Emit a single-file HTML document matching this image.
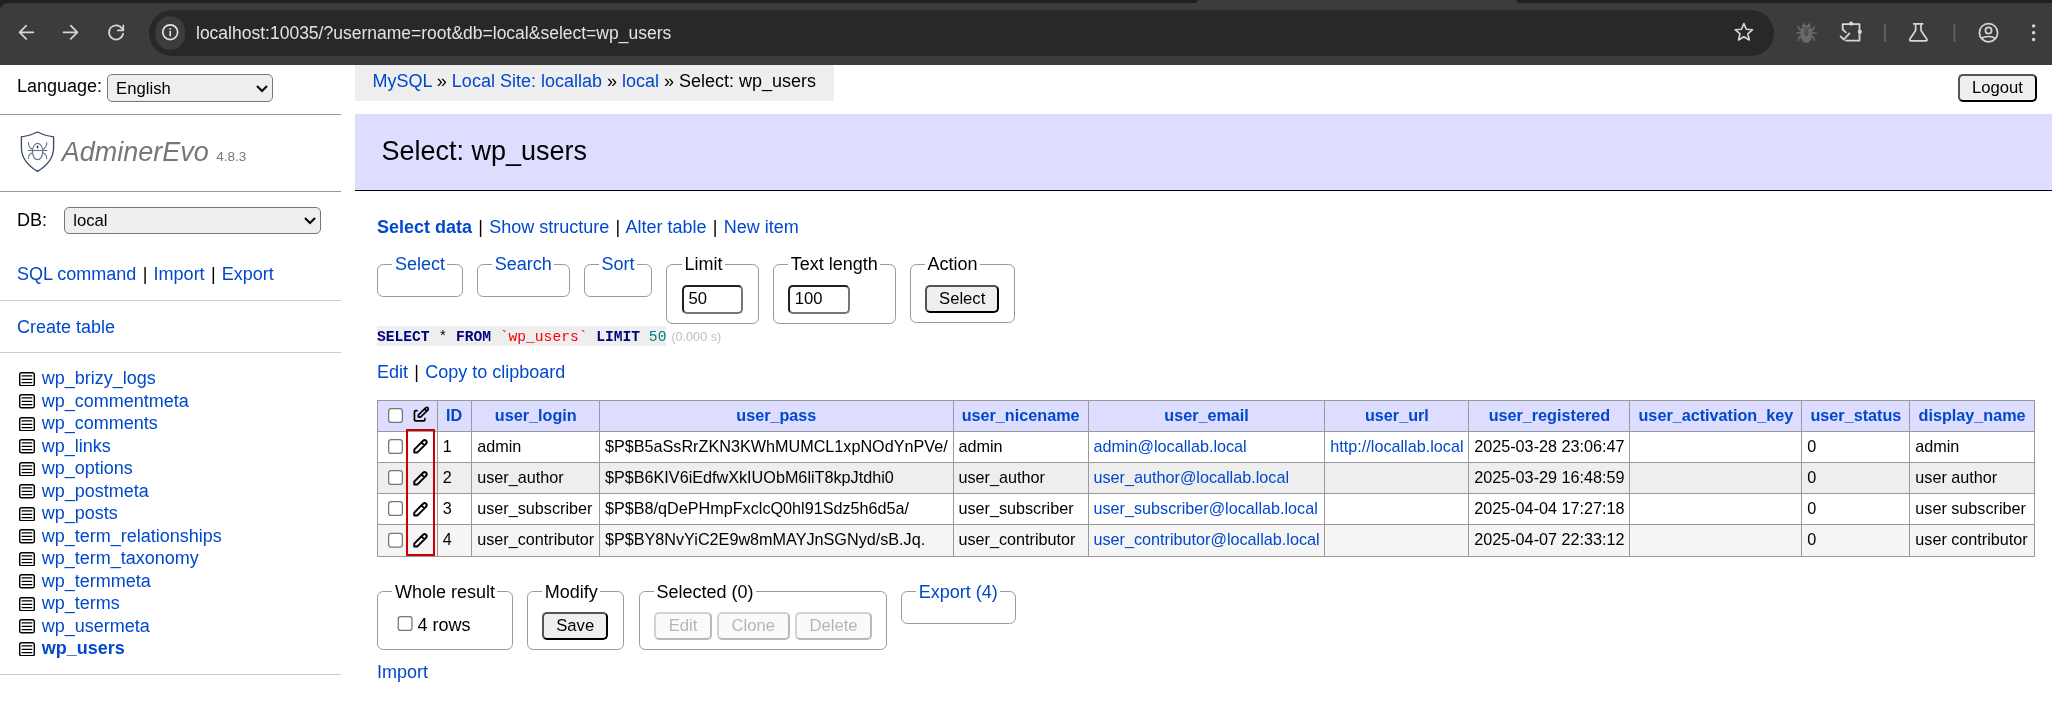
<!DOCTYPE html>
<html><head><meta charset="utf-8">
<style>
html,body{margin:0;padding:0;background:#fff;overflow:hidden}
body{width:2052px;height:703px;position:relative;font-family:"Liberation Sans",sans-serif}
#chrome{will-change:transform;position:absolute;left:0;top:0;width:2052px;height:65px;background:#1f2020;overflow:hidden}
#toolbar{position:absolute;left:0;top:3px;width:2052px;height:62px;background:#3c3c3c;border-top-left-radius:8px}
#acttab{position:absolute;left:1196px;top:0;width:322px;height:4px;background:#3c3c3c;border-radius:6px 6px 0 0}

#omni{position:absolute;left:149px;top:10px;width:1625px;height:46px;border-radius:23px;background:#282828}
#url{position:absolute;left:196px;top:23px;font-size:17.5px;color:#e3e3e3;white-space:pre}
#page{will-change:transform;position:absolute;left:-0.8px;top:52px;width:1700px;height:510.4px;zoom:1.25;overflow:hidden;color:#000;font-size:14.4px;line-height:1.25}
a{color:#0048cc;text-decoration:none}
h1{font-size:150%;margin:0;padding:.8em 1em;border-top:1px solid #999;border-bottom:1px solid #999;font-weight:normal;color:#777;background:#fff;white-space:nowrap}
h2{font-size:150%;margin:0 0 20px -18px;padding:.8em 1em;border-bottom:1px solid #000;color:#000;font-weight:normal;background:#ddf}
form{margin:0}
table{margin:1em 20px 0 0;border-collapse:collapse;font-size:90%}
td,th{border:1px solid #999;padding:.2em .3em}
th{background:#eee;text-align:left}
thead th{text-align:center;padding:.2em .5em}
thead td,thead th{background:#ddf}
fieldset{display:inline;vertical-align:top;padding:8.8px .8em 8px;margin:11.2px .5em 0 0;border:1px solid #999;border-radius:5px}
fieldset.c{padding-top:7.8px;padding-bottom:7.2px}
p{margin:.8em 20px 0 0}
input{vertical-align:middle}
input,select{border-radius:4px;font-family:inherit;font-size:13.33px}
select{padding:1.85px 0 1.85px 2.4px}
input[type=number]{padding:1.75px 3.6px}
input[type=submit]{padding:1.65px 9.6px}
input[disabled]{padding:1.65px 10.1px}
.footer{border-top:19.2px solid #fff}
.footer fieldset{margin-top:0;padding-top:8px}
.footer fieldset.c{padding-top:7px}
code{background:#eee;font-family:"Liberation Mono",monospace;font-size:11.7px;padding:2.4px 0 0.8px}
.jk{color:navy;font-weight:bold}
.js{color:red}
.jn{color:#008080}
.time{color:silver;font-size:70%}
.odds tbody tr:nth-child(2n) td{background:#f5f5f5}
.odds tbody tr.hov td{background:#eee}
.size{width:49.2px;box-sizing:border-box}
#menu{position:absolute;margin:10px 0 0;padding:0 0 30px 0;top:2em;left:0;width:19em}
#menu p,#tables{padding:.8em 1em;margin:0;border-bottom:1px solid #ccc}
#menu p#dbs{border-bottom:0}
#tables{list-style:none;white-space:nowrap}
#tables li{height:18px}
#tables svg{vertical-align:-1.6px;margin-left:1.6px;margin-right:5.4px}
#content{margin:2em 0 0 21em;padding:10px 20px 20px 0}
#lang{position:absolute;top:0;left:0;line-height:1.8em;padding:.3em 1em}
#breadcrumb{white-space:nowrap;position:absolute;top:0;left:21em;background:#eee;height:2em;line-height:1.8em;padding:0 1em;margin:0 0 0 -18px}
#h1{color:#777;text-decoration:none;font-style:italic}
#h1 svg{position:absolute;left:17px;top:13.84px}
#h1{padding-left:28.6px}
.version{color:#777;font-size:10.8px}
.logout{position:absolute;top:7.4px;left:1567.2px}
.nowrap td,.nowrap th{white-space:pre}
tbody td+td{padding-top:calc(.2em - 0.8px);padding-bottom:calc(.2em + 0.8px)}
thead th{padding-top:calc(.2em - 0.8px);padding-bottom:calc(.2em + 0.8px)}
.active{font-weight:bold}
.sep{margin:0 1px}
.ed svg{vertical-align:middle;margin-left:0.8px;margin-right:2.2px}
#redbox{position:absolute;left:325.6px;top:291.2px;width:19.6px;height:98.4px;border:1.6px solid #c00}
</style></head><body>
<div id="chrome">
<div id="toolbar"></div><div id="acttab"></div>
<div id="omni"></div>
<div id="url">localhost:10035/?username=root&amp;db=local&amp;select=wp_users</div>
<svg width="2052" height="65" style="position:absolute;left:0;top:0">
<g fill="none" stroke="#d6d6d6" stroke-width="1.7" stroke-linecap="round" stroke-linejoin="round">
<path d="M33.4 32.3H19.6M26.2 25.7L19.6 32.3L26.2 38.9"/>
<path d="M63.5 32.3H77.4M70.8 25.7L77.4 32.3L70.8 38.9"/>
<path d="M122.25 28.85A7.1 7.1 0 1 0 123.09 33.63"/>
<path d="M123.3 25.3V30.4H117.8"/>
</g>
<rect x="155.4" y="16.2" width="29.5" height="33.7" rx="14.75" fill="#3c3c3c"/>
<circle cx="170.2" cy="32.2" r="7.4" fill="none" stroke="#e3e3e3" stroke-width="1.7"/>
<path d="M170.2 31.1V36.2" stroke="#e3e3e3" stroke-width="1.6"/>
<circle cx="170.2" cy="28.9" r="0.95" fill="#e3e3e3"/>
<path d="M1743.9 23.6L1746.3 29.2L1752.6 29.7L1747.8 33.8L1749.3 40L1743.9 36.7L1738.5 40L1740 33.8L1735.2 29.7L1741.5 29.2Z" fill="none" stroke="#d6d6d6" stroke-width="1.6" stroke-linejoin="round"/>
<g fill="#6a6a6a" stroke="none">
<path d="M1801.6 27.4L1803.4 22.6L1805.2 25.2H1807.4L1809.2 22.6L1811 27.4Z"/>
<path d="M1800.6 28.2H1812V35.5C1812 40 1809.5 42.8 1806.3 42.8C1803.1 42.8 1800.6 40 1800.6 35.5Z"/>
</g>
<g fill="none" stroke="#6a6a6a" stroke-width="1.5" stroke-linecap="round">
<path d="M1796.6 32.9H1816.2M1801 30.2C1799.2 30 1798.4 28.8 1798.4 26.6M1811.6 30.2C1813.4 30 1814.2 28.8 1814.2 26.6M1801 36.4C1799.2 36.6 1798.4 37.8 1798.4 40.2M1811.6 36.4C1813.4 36.6 1814.2 37.8 1814.2 40.2"/>
</g>
<path d="M1804.8 29.2V34.6A1.5 1.5 0 0 0 1807.8 34.6V29.2" fill="#505050" stroke="#505050" stroke-width="0.8"/>
<g fill="none" stroke="#d6d6d6" stroke-width="1.8" stroke-linejoin="round" stroke-linecap="round">
<path d="M1842.7 29.3V24.1H1859.5V40.6H1846"/>
<path d="M1842.7 29.3L1845.8 32.3"/>
<path d="M1840.6 36.4L1843.8 39.5L1849.4 33.4"/>
</g>
<g fill="#d6d6d6"><circle cx="1851.1" cy="23.6" r="2.1"/><circle cx="1859.8" cy="31.8" r="2.1"/></g>
<path d="M1884.9 23.5V42" stroke="#5e5e5e" stroke-width="2"/>
<path d="M1954.4 23.5V42" stroke="#5e5e5e" stroke-width="2"/>
<g fill="none" stroke="#d6d6d6" stroke-width="1.7" stroke-linejoin="round">
<path d="M1913 23.9H1923.3M1915.6 23.9V30.6L1909.8 39.2Q1909.3 40.9 1911 40.9H1925.8Q1927.4 40.9 1926.9 39.2L1921 30.6V23.9"/>
<circle cx="1988.5" cy="32.7" r="9.1"/>
<circle cx="1988.5" cy="30.4" r="3.1"/>
<path d="M1981.5 38.6C1983 37.2 1985.5 36.5 1988.5 36.5C1991.5 36.5 1994 37.2 1995.5 38.6"/>
</g>
<g fill="#d6d6d6"><circle cx="2033.6" cy="25.9" r="1.7"/><circle cx="2033.6" cy="32.7" r="1.7"/><circle cx="2033.6" cy="39.5" r="1.7"/></g>
</svg>
</div>
<div id="page">
<div id="lang">Language: <select style="width:132.8px;position:relative;top:0.9px;padding-top:2.25px"><option>English</option></select></div>
<div id="menu">
<h1><a id="h1"><svg width="28.8" height="33.6" viewBox="0 0 36 42" style="font-style:normal"><path d="M17.5 1C12.5 3.6 7 5 1.4 5.8V17.5C1.8 28 8.5 35 17.5 40.4C26.5 35 33.2 28 33.6 17.5V5.8C28 5 22.5 3.6 17.5 1Z" fill="none" stroke="#34476a" stroke-width="1.3"/><g fill="none" stroke="#62718a" stroke-width="1.1"><ellipse cx="17.6" cy="20.6" rx="5.1" ry="8.2"/><path d="M7.9 19.5H27.4"/><path d="M8.4 11.3C8.4 15 9.5 17.5 12.8 18.4M26.8 11.3C26.8 15 25.7 17.5 22.4 18.4M12.5 21.7C9.5 22.3 8.4 24.5 8.4 28M22.7 21.7C25.7 22.3 26.8 24.5 26.8 28"/></g><ellipse cx="17.6" cy="16.1" rx="0.9" ry="1.5" fill="#2a3d5e"/></svg>AdminerEvo</a> <span class="version">4.8.3</span></h1>
<p id="dbs">DB: <select style="width:205.6px;margin-left:9.8px"><option>local</option></select></p>
<p class="links"><a>SQL command</a> <span class="sep">|</span> <a>Import</a> <span class="sep">|</span> <a>Export</a></p>
<p class="links" style="padding-bottom:10.9px"><a>Create table</a></p>
<ul id="tables">
<li><a class="ti"><svg width="12.8" height="11.6" viewBox="0 0 16 14.5"><rect x="0.7" y="0.7" width="14.6" height="13.1" rx="1.9" fill="none" stroke="#000" stroke-width="1.45"/><path d="M3.1 3.95H12.8M3.1 7.3H12.8M3.1 10.65H12.8" stroke="#000" stroke-width="1.3" stroke-linecap="round"/></svg></a><a>wp_brizy_logs</a></li>
<li><a class="ti"><svg width="12.8" height="11.6" viewBox="0 0 16 14.5"><rect x="0.7" y="0.7" width="14.6" height="13.1" rx="1.9" fill="none" stroke="#000" stroke-width="1.45"/><path d="M3.1 3.95H12.8M3.1 7.3H12.8M3.1 10.65H12.8" stroke="#000" stroke-width="1.3" stroke-linecap="round"/></svg></a><a>wp_commentmeta</a></li>
<li><a class="ti"><svg width="12.8" height="11.6" viewBox="0 0 16 14.5"><rect x="0.7" y="0.7" width="14.6" height="13.1" rx="1.9" fill="none" stroke="#000" stroke-width="1.45"/><path d="M3.1 3.95H12.8M3.1 7.3H12.8M3.1 10.65H12.8" stroke="#000" stroke-width="1.3" stroke-linecap="round"/></svg></a><a>wp_comments</a></li>
<li><a class="ti"><svg width="12.8" height="11.6" viewBox="0 0 16 14.5"><rect x="0.7" y="0.7" width="14.6" height="13.1" rx="1.9" fill="none" stroke="#000" stroke-width="1.45"/><path d="M3.1 3.95H12.8M3.1 7.3H12.8M3.1 10.65H12.8" stroke="#000" stroke-width="1.3" stroke-linecap="round"/></svg></a><a>wp_links</a></li>
<li><a class="ti"><svg width="12.8" height="11.6" viewBox="0 0 16 14.5"><rect x="0.7" y="0.7" width="14.6" height="13.1" rx="1.9" fill="none" stroke="#000" stroke-width="1.45"/><path d="M3.1 3.95H12.8M3.1 7.3H12.8M3.1 10.65H12.8" stroke="#000" stroke-width="1.3" stroke-linecap="round"/></svg></a><a>wp_options</a></li>
<li><a class="ti"><svg width="12.8" height="11.6" viewBox="0 0 16 14.5"><rect x="0.7" y="0.7" width="14.6" height="13.1" rx="1.9" fill="none" stroke="#000" stroke-width="1.45"/><path d="M3.1 3.95H12.8M3.1 7.3H12.8M3.1 10.65H12.8" stroke="#000" stroke-width="1.3" stroke-linecap="round"/></svg></a><a>wp_postmeta</a></li>
<li><a class="ti"><svg width="12.8" height="11.6" viewBox="0 0 16 14.5"><rect x="0.7" y="0.7" width="14.6" height="13.1" rx="1.9" fill="none" stroke="#000" stroke-width="1.45"/><path d="M3.1 3.95H12.8M3.1 7.3H12.8M3.1 10.65H12.8" stroke="#000" stroke-width="1.3" stroke-linecap="round"/></svg></a><a>wp_posts</a></li>
<li><a class="ti"><svg width="12.8" height="11.6" viewBox="0 0 16 14.5"><rect x="0.7" y="0.7" width="14.6" height="13.1" rx="1.9" fill="none" stroke="#000" stroke-width="1.45"/><path d="M3.1 3.95H12.8M3.1 7.3H12.8M3.1 10.65H12.8" stroke="#000" stroke-width="1.3" stroke-linecap="round"/></svg></a><a>wp_term_relationships</a></li>
<li><a class="ti"><svg width="12.8" height="11.6" viewBox="0 0 16 14.5"><rect x="0.7" y="0.7" width="14.6" height="13.1" rx="1.9" fill="none" stroke="#000" stroke-width="1.45"/><path d="M3.1 3.95H12.8M3.1 7.3H12.8M3.1 10.65H12.8" stroke="#000" stroke-width="1.3" stroke-linecap="round"/></svg></a><a>wp_term_taxonomy</a></li>
<li><a class="ti"><svg width="12.8" height="11.6" viewBox="0 0 16 14.5"><rect x="0.7" y="0.7" width="14.6" height="13.1" rx="1.9" fill="none" stroke="#000" stroke-width="1.45"/><path d="M3.1 3.95H12.8M3.1 7.3H12.8M3.1 10.65H12.8" stroke="#000" stroke-width="1.3" stroke-linecap="round"/></svg></a><a>wp_termmeta</a></li>
<li><a class="ti"><svg width="12.8" height="11.6" viewBox="0 0 16 14.5"><rect x="0.7" y="0.7" width="14.6" height="13.1" rx="1.9" fill="none" stroke="#000" stroke-width="1.45"/><path d="M3.1 3.95H12.8M3.1 7.3H12.8M3.1 10.65H12.8" stroke="#000" stroke-width="1.3" stroke-linecap="round"/></svg></a><a>wp_terms</a></li>
<li><a class="ti"><svg width="12.8" height="11.6" viewBox="0 0 16 14.5"><rect x="0.7" y="0.7" width="14.6" height="13.1" rx="1.9" fill="none" stroke="#000" stroke-width="1.45"/><path d="M3.1 3.95H12.8M3.1 7.3H12.8M3.1 10.65H12.8" stroke="#000" stroke-width="1.3" stroke-linecap="round"/></svg></a><a>wp_usermeta</a></li>
<li><a class="ti"><svg width="12.8" height="11.6" viewBox="0 0 16 14.5"><rect x="0.7" y="0.7" width="14.6" height="13.1" rx="1.9" fill="none" stroke="#000" stroke-width="1.45"/><path d="M3.1 3.95H12.8M3.1 7.3H12.8M3.1 10.65H12.8" stroke="#000" stroke-width="1.3" stroke-linecap="round"/></svg></a><a class="active">wp_users</a></li>
</ul>
</div>
<div id="content">
<p id="breadcrumb"><a>MySQL</a> » <a>Local Site: locallab</a> » <a>local</a> » Select: wp_users</p>
<h2>Select: wp_users</h2>
<p class="links"><a class="active">Select data</a> <span class="sep">|</span> <a>Show structure</a> <span class="sep">|</span> <a>Alter table</a> <span class="sep">|</span> <a>New item</a></p>
<form>
<fieldset><legend><a>Select</a></legend></fieldset>
<fieldset><legend><a>Search</a></legend></fieldset>
<fieldset><legend><a>Sort</a></legend></fieldset>
<fieldset class="c"><legend>Limit</legend><div><input type="number" class="size" value="50"></div></fieldset>
<fieldset class="c"><legend>Text length</legend><div><input type="number" class="size" value="100"></div></fieldset>
<fieldset class="c"><legend>Action</legend><div><input type="submit" value="Select"></div></fieldset>
</form>
<p style="margin-top:0.3px;margin-bottom:-0.8px"><code><span class="jk">SELECT</span> * <span class="jk">FROM</span> <span class="js">`wp_users`</span> <span class="jk">LIMIT</span> <span class="jn">50</span></code> <span class="time">(0.000 s)</span></p>
<p class="links" style="margin-top:12.7px"><a>Edit</a> <span class="sep">|</span> <a>Copy to clipboard</a></p>
<table class="nowrap odds" style="margin-top:12.6px">
<thead><tr><td><input type="checkbox"> <a class="ed"><svg width="12.8" height="12.8" viewBox="0 0 16 16" style="position:relative;top:-1.4px"><path d="M3.9 4.7H2.6Q1.46 4.7 1.46 5.9V13.8Q1.46 14.95 2.6 14.95H10.8Q11.9 14.95 11.9 13.8V12.7" fill="none" stroke="#000" stroke-width="1.75" stroke-linecap="round"/><g transform="translate(9.58 7) rotate(-43.7)"><path d="M-4.3 -1.55H5.78A1.55 1.55 0 0 1 5.78 1.55H-4.3L-5.85 0Z M4.3 -1.55V1.55" fill="none" stroke="#000" stroke-width="1.7" stroke-linejoin="round"/></g></svg></a></td><th style="padding-right:7.3px"><a>ID</a></th><th><a>user_login</a></th><th><a>user_pass</a></th><th><a>user_nicename</a></th><th><a>user_email</a></th><th><a>user_url</a></th><th><a>user_registered</a></th><th><a>user_activation_key</a></th><th><a>user_status</a></th><th><a>display_name</a></th></tr></thead>
<tbody>
<tr><td><input type="checkbox"> <a class="ed"><svg width="12.8" height="12" viewBox="0 0 16 15" style="overflow:visible"><g transform="translate(6.4 8.4) rotate(-45)"><path d="M-5.2 -2.1H7.3A2.1 2.1 0 0 1 7.3 2.1H-5.2L-7.3 0Z M4.9 -2.1V2.1" fill="none" stroke="#000" stroke-width="1.9" stroke-linejoin="round"/></g></svg></a></td><td>1</td><td>admin</td><td>$P$B5aSsRrZKN3KWhMUMCL1xpNOdYnPVe/</td><td>admin</td><td><a>admin@locallab.local</a></td><td><a>http://locallab.local</a></td><td>2025-03-28 23:06:47</td><td></td><td>0</td><td>admin</td></tr>
<tr class="hov"><td><input type="checkbox"> <a class="ed"><svg width="12.8" height="12" viewBox="0 0 16 15" style="overflow:visible"><g transform="translate(6.4 8.4) rotate(-45)"><path d="M-5.2 -2.1H7.3A2.1 2.1 0 0 1 7.3 2.1H-5.2L-7.3 0Z M4.9 -2.1V2.1" fill="none" stroke="#000" stroke-width="1.9" stroke-linejoin="round"/></g></svg></a></td><td>2</td><td>user_author</td><td>$P$B6KIV6iEdfwXkIUObM6liT8kpJtdhi0</td><td>user_author</td><td><a>user_author@locallab.local</a></td><td></td><td>2025-03-29 16:48:59</td><td></td><td>0</td><td>user author</td></tr>
<tr><td><input type="checkbox"> <a class="ed"><svg width="12.8" height="12" viewBox="0 0 16 15" style="overflow:visible"><g transform="translate(6.4 8.4) rotate(-45)"><path d="M-5.2 -2.1H7.3A2.1 2.1 0 0 1 7.3 2.1H-5.2L-7.3 0Z M4.9 -2.1V2.1" fill="none" stroke="#000" stroke-width="1.9" stroke-linejoin="round"/></g></svg></a></td><td>3</td><td>user_subscriber</td><td>$P$B8/qDePHmpFxclcQ0hl91Sdz5h6d5a/</td><td>user_subscriber</td><td><a>user_subscriber@locallab.local</a></td><td></td><td>2025-04-04 17:27:18</td><td></td><td>0</td><td>user subscriber</td></tr>
<tr><td><input type="checkbox"> <a class="ed"><svg width="12.8" height="12" viewBox="0 0 16 15" style="overflow:visible"><g transform="translate(6.4 8.4) rotate(-45)"><path d="M-5.2 -2.1H7.3A2.1 2.1 0 0 1 7.3 2.1H-5.2L-7.3 0Z M4.9 -2.1V2.1" fill="none" stroke="#000" stroke-width="1.9" stroke-linejoin="round"/></g></svg></a></td><td>4</td><td>user_contributor</td><td>$P$BY8NvYiC2E9w8mMAYJnSGNyd/sB.Jq.</td><td>user_contributor</td><td><a>user_contributor@locallab.local</a></td><td></td><td>2025-04-07 22:33:12</td><td></td><td>0</td><td>user contributor</td></tr>
</tbody></table>
<form class="footer">
<fieldset><legend>Whole result</legend><div style="line-height:20.7px"><label><input type="checkbox" style="position:relative;top:-2.15px">4 rows</label></div></fieldset>
<fieldset class="c"><legend>Modify</legend><div><input type="submit" value="Save"></div></fieldset>
<fieldset class="c" style="padding-right:11px;margin-left:0.8px"><legend>Selected (0)</legend><div><input type="submit" value="Edit" disabled> <input type="submit" value="Clone" disabled> <input type="submit" value="Delete" disabled></div></fieldset>
<fieldset style="margin-left:0"><legend><a>Export (4)</a></legend></fieldset>
</form>
<p class="links" style="margin-top:8.7px"><a>Import</a></p>
</div>
<form class="logout"><input type="submit" value="Logout"></form>
<div id="redbox"></div>
</div>
</body></html>
